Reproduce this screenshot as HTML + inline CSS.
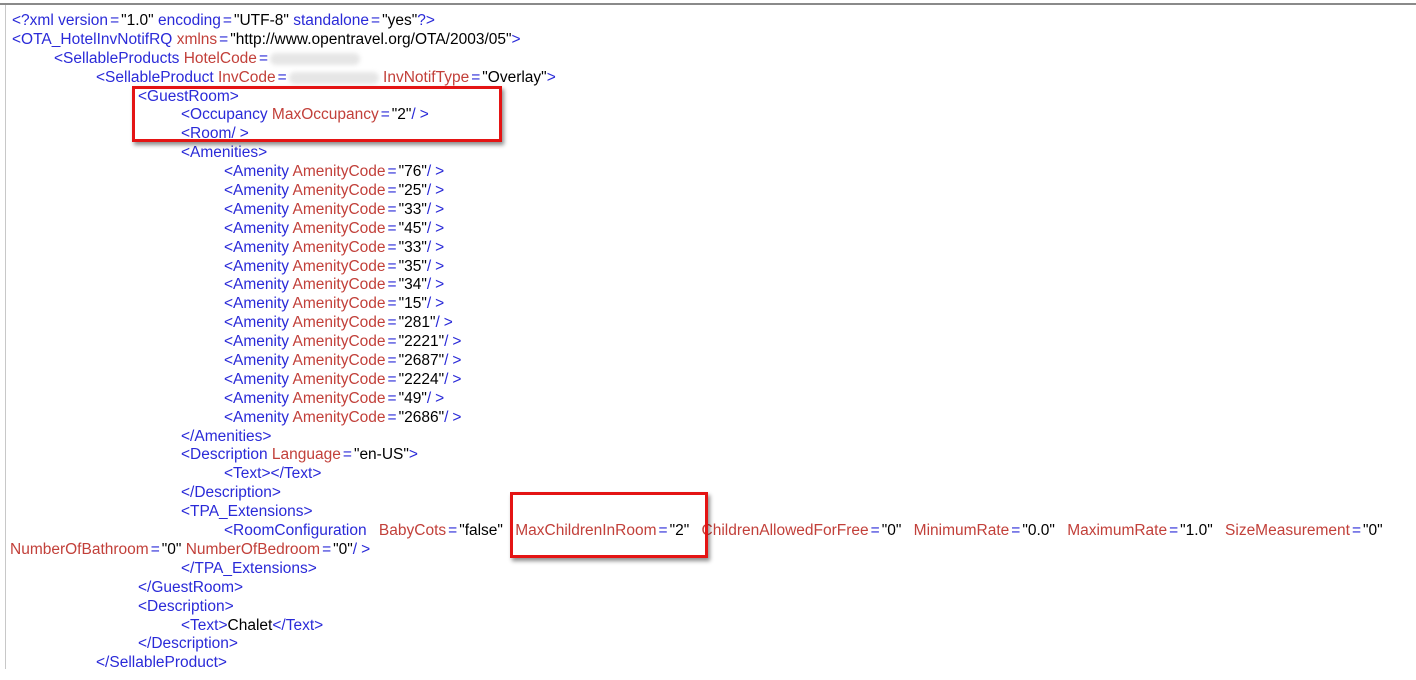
<!DOCTYPE html>
<html><head><meta charset="utf-8"><style>
html,body{margin:0;padding:0;background:#fff;width:1416px;height:680px;overflow:hidden}
.top{position:absolute;left:0;top:3px;width:1416px;height:2px;background:#8a8a8a}
.left{position:absolute;left:5px;top:5px;width:1px;height:664px;background:#c8c8c8}
.code{position:absolute;left:0;top:12px;font-family:"Liberation Sans",sans-serif;font-size:15.5px;line-height:18.9px;color:#000}
.l{position:relative;height:18.9px;white-space:pre}
.t{color:#2a2ad8}.a{color:#c2403a}
.e{color:#2a2ad8;margin:0 2px}
.s{color:#2a2ad8;letter-spacing:4px}
.box{position:absolute;border:3px solid #e41414;box-shadow:2px 3px 4px rgba(0,0,0,.45)}
.blur{display:inline-block;width:90px;height:12px;background:#e6e6e6;border-radius:6px;vertical-align:middle;filter:blur(2px)}
</style></head><body>
<div class="top"></div><div class="left"></div>
<div class="code"><div class="l" style="padding-left:12px"><span class="t">&lt;?xml version</span><span class="e">=</span>"1.0" <span class="t">encoding</span><span class="e">=</span>"UTF-8" <span class="t">standalone</span><span class="e">=</span>"yes"<span class="t">?&gt;</span></div><div class="l" style="padding-left:12px"><span class="t">&lt;OTA_HotelInvNotifRQ</span> <span class="a">xmlns</span><span class="e">=</span>"http://www.opentravel.org/OTA/2003/05"<span class="t">&gt;</span></div><div class="l" style="padding-left:54px"><span class="t">&lt;SellableProducts</span> <span class="a">HotelCode</span><span class="e">=</span><span class="blur"></span></div><div class="l" style="padding-left:96px"><span class="t">&lt;SellableProduct</span> <span class="a">InvCode</span><span class="e">=</span><span class="blur"></span> <span class="a">InvNotifType</span><span class="e">=</span>"Overlay"<span class="t">&gt;</span></div><div class="l" style="padding-left:138px"><span class="t">&lt;GuestRoom&gt;</span></div><div class="l" style="padding-left:181px"><span class="t">&lt;Occupancy</span> <span class="a">MaxOccupancy</span><span class="e">=</span>"2"<span class="s">/&gt;</span></div><div class="l" style="padding-left:181px"><span class="t">&lt;Room</span><span class="s">/&gt;</span></div><div class="l" style="padding-left:181px"><span class="t">&lt;Amenities&gt;</span></div><div class="l" style="padding-left:224px"><span class="t">&lt;Amenity</span> <span class="a">AmenityCode</span><span class="e">=</span>"76"<span class="s">/&gt;</span></div><div class="l" style="padding-left:224px"><span class="t">&lt;Amenity</span> <span class="a">AmenityCode</span><span class="e">=</span>"25"<span class="s">/&gt;</span></div><div class="l" style="padding-left:224px"><span class="t">&lt;Amenity</span> <span class="a">AmenityCode</span><span class="e">=</span>"33"<span class="s">/&gt;</span></div><div class="l" style="padding-left:224px"><span class="t">&lt;Amenity</span> <span class="a">AmenityCode</span><span class="e">=</span>"45"<span class="s">/&gt;</span></div><div class="l" style="padding-left:224px"><span class="t">&lt;Amenity</span> <span class="a">AmenityCode</span><span class="e">=</span>"33"<span class="s">/&gt;</span></div><div class="l" style="padding-left:224px"><span class="t">&lt;Amenity</span> <span class="a">AmenityCode</span><span class="e">=</span>"35"<span class="s">/&gt;</span></div><div class="l" style="padding-left:224px"><span class="t">&lt;Amenity</span> <span class="a">AmenityCode</span><span class="e">=</span>"34"<span class="s">/&gt;</span></div><div class="l" style="padding-left:224px"><span class="t">&lt;Amenity</span> <span class="a">AmenityCode</span><span class="e">=</span>"15"<span class="s">/&gt;</span></div><div class="l" style="padding-left:224px"><span class="t">&lt;Amenity</span> <span class="a">AmenityCode</span><span class="e">=</span>"281"<span class="s">/&gt;</span></div><div class="l" style="padding-left:224px"><span class="t">&lt;Amenity</span> <span class="a">AmenityCode</span><span class="e">=</span>"2221"<span class="s">/&gt;</span></div><div class="l" style="padding-left:224px"><span class="t">&lt;Amenity</span> <span class="a">AmenityCode</span><span class="e">=</span>"2687"<span class="s">/&gt;</span></div><div class="l" style="padding-left:224px"><span class="t">&lt;Amenity</span> <span class="a">AmenityCode</span><span class="e">=</span>"2224"<span class="s">/&gt;</span></div><div class="l" style="padding-left:224px"><span class="t">&lt;Amenity</span> <span class="a">AmenityCode</span><span class="e">=</span>"49"<span class="s">/&gt;</span></div><div class="l" style="padding-left:224px"><span class="t">&lt;Amenity</span> <span class="a">AmenityCode</span><span class="e">=</span>"2686"<span class="s">/&gt;</span></div><div class="l" style="padding-left:181px"><span class="t">&lt;/Amenities&gt;</span></div><div class="l" style="padding-left:181px"><span class="t">&lt;Description</span> <span class="a">Language</span><span class="e">=</span>"en-US"<span class="t">&gt;</span></div><div class="l" style="padding-left:224px"><span class="t">&lt;Text&gt;&lt;/Text&gt;</span></div><div class="l" style="padding-left:181px"><span class="t">&lt;/Description&gt;</span></div><div class="l" style="padding-left:181px"><span class="t">&lt;TPA_Extensions&gt;</span></div><div class="l" style="padding-left:224px;word-spacing:8px"><span class="t">&lt;RoomConfiguration</span> <span class="a">BabyCots</span><span class="e">=</span>"false" <span class="a">MaxChildrenInRoom</span><span class="e">=</span>"2" <span class="a">ChildrenAllowedForFree</span><span class="e">=</span>"0" <span class="a">MinimumRate</span><span class="e">=</span>"0.0" <span class="a">MaximumRate</span><span class="e">=</span>"1.0" <span class="a">SizeMeasurement</span><span class="e">=</span>"0"</div><div class="l" style="padding-left:10px"><span class="a">NumberOfBathroom</span><span class="e">=</span>"0" <span class="a">NumberOfBedroom</span><span class="e">=</span>"0"<span class="s">/&gt;</span></div><div class="l" style="padding-left:181px"><span class="t">&lt;/TPA_Extensions&gt;</span></div><div class="l" style="padding-left:138px"><span class="t">&lt;/GuestRoom&gt;</span></div><div class="l" style="padding-left:138px"><span class="t">&lt;Description&gt;</span></div><div class="l" style="padding-left:181px"><span class="t">&lt;Text&gt;</span>Chalet<span class="t">&lt;/Text&gt;</span></div><div class="l" style="padding-left:138px"><span class="t">&lt;/Description&gt;</span></div><div class="l" style="padding-left:96px"><span class="t">&lt;/SellableProduct&gt;</span></div></div>
<div class="box" style="left:132px;top:86px;width:364px;height:50px"></div>
<div class="box" style="left:510px;top:492px;width:192px;height:60px"></div>
</body></html>
